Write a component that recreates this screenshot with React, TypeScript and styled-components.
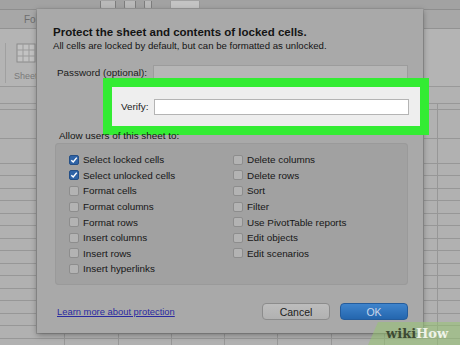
import React, { FC } from 'react';
import styled, { createGlobalStyle } from 'styled-components';

const GlobalStyle = createGlobalStyle`
  html, body {
    margin: 0;
    padding: 0;
    background: #adadad;
  }
  body {
    font-family: 'Liberation Sans', Arial, sans-serif;
  }
`;

const Screen = styled.div`
  position: relative;
  width: 460px;
  height: 345px;
  overflow: hidden;
  display: flex;
  flex-direction: column;
  background: #afafaf;
`;

const TopToolbar = styled.div`
  height: 9px;
  flex: none;
  background: #a2a2a2;
  border-bottom: 1px solid #8e8e8e;
  display: flex;
  align-items: flex-end;
  gap: 8px;
  padding-left: 100px;
`;

const ToolIcon = styled.div<{ w: number }>`
  width: ${(p) => p.w}px;
  height: 7px;
  border: 1px solid #7d7d7d;
  border-top: none;
  border-radius: 0 0 2px 2px;
  background: #b9b9b9;
`;

const ToolField = styled.div`
  width: 28px;
  height: 7px;
  margin-left: 10px;
  background: #c4c4c4;
  border: 1px solid #9a9a9a;
  border-top: none;
`;

const TabBar = styled.div`
  height: 18px;
  flex: none;
  background: #a7a7a7;
  border-bottom: 1px solid #929292;
  display: flex;
  align-items: center;
  padding-left: 24px;
`;

const Tab = styled.span`
  font-size: 10px;
  color: #6e6e6e;
`;

const Ribbon = styled.div`
  height: 58px;
  flex: none;
  background: #b4b4b4;
  border-bottom: 1px solid #999;
  display: flex;
  align-items: flex-start;
  padding: 14px 0 0 5px;
  box-sizing: border-box;
`;

const RibbonGroup = styled.div`
  display: flex;
  flex-direction: column;
  align-items: center;
  gap: 8px;
  padding-left: 8px;
  border-left: 1px solid #a0a0a0;
  height: 40px;
`;

const RibbonLabel = styled.span`
  font-size: 9px;
  color: #7a7a7a;
`;

const FormulaBar = styled.div`
  height: 16px;
  flex: none;
  background: #b2b2b2;
  border-bottom: 1px solid #989898;
`;

const Sheet = styled.div`
  flex: 1;
  background-color: #b1b1b1;
  background-image:
    repeating-linear-gradient(to bottom, transparent 0, transparent 11.5px, #979797 11.5px, #979797 12.5px),
    repeating-linear-gradient(to right, transparent 0, transparent 52.3px, #979797 52.3px, #979797 53.3px);
  background-position: 0 10px, 12px 0;
`;

const Dialog = styled.div`
  position: absolute;
  left: 37px;
  top: 9px;
  width: 386px;
  height: 324px;
  box-sizing: border-box;
  background: #a9a9a9;
  box-shadow: 0 2px 6px rgba(0, 0, 0, 0.35), 0 0 0 1px #9a9a9a;
  padding: 16px 15px 0 16px;
  display: flex;
  flex-direction: column;
  color: #141414;
`;

const Title = styled.div`
  font-size: 11.5px;
  font-weight: bold;
  line-height: 15px;
`;

const Subtitle = styled.div`
  font-size: 9.6px;
  line-height: 12px;
  margin-bottom: 13px;
`;

const FieldRow = styled.div`
  display: flex;
  align-items: center;
  gap: 6px;
`;

const FieldLabel = styled.label`
  width: 94px;
  text-align: right;
  font-size: 9.9px;
  color: #1a1a1a;
`;

const Input = styled.div`
  flex: 1;
  height: 14px;
  box-sizing: border-box;
  background: #b6b6b6;
  border: 1px solid #9c9c9c;
`;

const Highlight = styled.div`
  margin: -1px -21px 0 50px;
  height: 57px;
  box-sizing: border-box;
  border: 9px solid #33ec33;
  background: #eeeeee;
  display: flex;
  align-items: center;
  gap: 6px;
  padding: 0 11px 0 9px;
`;

const VerifyLabel = styled.label`
  font-size: 9.9px;
  color: #1a1a1a;
`;

const VerifyInput = styled.div`
  flex: 1;
  height: 16px;
  box-sizing: border-box;
  background: #ffffff;
  border: 1px solid #b4b4b4;
`;

const SectionLabel = styled.div`
  font-size: 9.9px;
  line-height: 10px;
  margin: -4px 0 2px 6px;
`;

const OptionsBox = styled.div`
  margin: 0 0 0 2px;
  width: 353px;
  height: 142px;
  box-sizing: border-box;
  background: #a1a1a1;
  border-radius: 4px;
  box-shadow: inset 0 0 0 1px #9a9a9a;
  padding: 9px 0 0 14px;
  display: grid;
  grid-template-columns: 164px 1fr;
  grid-auto-flow: column;
  grid-template-rows: repeat(8, 15.6px);
`;

const Option = styled.label`
  display: flex;
  align-items: center;
  gap: 4px;
  font-size: 9.9px;
  color: #161616;
  white-space: nowrap;
`;

const Box = styled.span<{ checked?: boolean }>`
  width: 10px;
  height: 10px;
  box-sizing: border-box;
  border-radius: 2px;
  display: inline-flex;
  align-items: center;
  justify-content: center;
  background: ${(p) => (p.checked ? '#2f63a6' : '#b3b3b3')};
  border: 1px solid ${(p) => (p.checked ? '#244f86' : '#8d8d8d')};
`;

const Footer = styled.div`
  margin-top: 18px;
  display: flex;
  align-items: center;
`;

const LearnLink = styled.a`
  font-size: 9.4px;
  color: #2a2aa0;
  text-decoration: underline;
  margin-left: 4px;
  margin-right: auto;
`;

const Button = styled.button<{ primary?: boolean }>`
  width: 68px;
  height: 17px;
  margin-left: 10px;
  border-radius: 4px;
  font-family: 'Liberation Sans', Arial, sans-serif;
  font-size: 10.5px;
  padding: 0;
  color: ${(p) => (p.primary ? '#c9d7ea' : '#1c1c1c')};
  background: ${(p) =>
    p.primary
      ? 'linear-gradient(#3f84cc, #2466ae)'
      : 'linear-gradient(#bdbdbd, #b1b1b1)'};
  border: 1px solid ${(p) => (p.primary ? '#245c9c' : '#8c8c8c')};
`;

const Watermark = styled.div`
  position: absolute;
  right: 0;
  bottom: 0;
  width: 92px;
  height: 23px;
  background: rgba(150, 200, 110, 0.5);
  clip-path: polygon(10px 0, 100% 0, 100% 100%, 0 100%);
  display: flex;
  align-items: center;
  padding-left: 18px;
  box-sizing: border-box;
  font-family: 'DejaVu Serif', 'Liberation Serif', serif;
  font-weight: bold;
  font-size: 13px;
`;

const Wiki = styled.span`
  color: #3d4a33;
`;

const How = styled.span`
  color: #eef3e8;
`;

const Check: FC = () => (
  <svg width="8" height="8" viewBox="0 0 8 8">
    <path d="M1.3 4.2 L3.2 6 L6.8 1.6" fill="none" stroke="#fff" strokeWidth="1.5" />
  </svg>
);

const leftOptions: [string, boolean][] = [
  ['Select locked cells', true],
  ['Select unlocked cells', true],
  ['Format cells', false],
  ['Format columns', false],
  ['Format rows', false],
  ['Insert columns', false],
  ['Insert rows', false],
  ['Insert hyperlinks', false],
];

const rightOptions: [string, boolean][] = [
  ['Delete columns', false],
  ['Delete rows', false],
  ['Sort', false],
  ['Filter', false],
  ['Use PivotTable reports', false],
  ['Edit objects', false],
  ['Edit scenarios', false],
];

const App: FC = () => {
  const renderOption = ([label, checked]: [string, boolean]) => (
    <Option key={label}>
      <Box checked={checked}>{checked && <Check />}</Box>
      {label}
    </Option>
  );

  return (
    <>
      <GlobalStyle />
      <Screen>
        <TopToolbar>
          <ToolIcon w={14} />
          <ToolIcon w={10} />
          <ToolIcon w={6} />
          <ToolField />
        </TopToolbar>
        <TabBar>
          <Tab>Formulas</Tab>
        </TabBar>
        <Ribbon>
          <RibbonGroup>
            <svg width="20" height="20" viewBox="0 0 20 20">
              <rect x="1" y="1" width="18" height="18" fill="#c2c2c2" stroke="#8a8a8a" />
              <path d="M1 7H19M1 13H19M7 1V19M13 1V19" stroke="#9a9a9a" />
            </svg>
            <RibbonLabel>Sheet</RibbonLabel>
          </RibbonGroup>
        </Ribbon>
        <FormulaBar />
        <Sheet />

        <Dialog>
          <Title>Protect the sheet and contents of locked cells.</Title>
          <Subtitle>All cells are locked by default, but can be formatted as unlocked.</Subtitle>
          <FieldRow>
            <FieldLabel>Password (optional):</FieldLabel>
            <Input />
          </FieldRow>
          <Highlight>
            <VerifyLabel>Verify:</VerifyLabel>
            <VerifyInput />
          </Highlight>
          <SectionLabel>Allow users of this sheet to:</SectionLabel>
          <OptionsBox>
            {leftOptions.map(renderOption)}
            {rightOptions.map(renderOption)}
          </OptionsBox>
          <Footer>
            <LearnLink href="#">Learn more about protection</LearnLink>
            <Button>Cancel</Button>
            <Button primary>OK</Button>
          </Footer>
        </Dialog>

        <Watermark>
          <Wiki>wiki</Wiki>
          <How>How</How>
        </Watermark>
      </Screen>
    </>
  );
};

export default App;
